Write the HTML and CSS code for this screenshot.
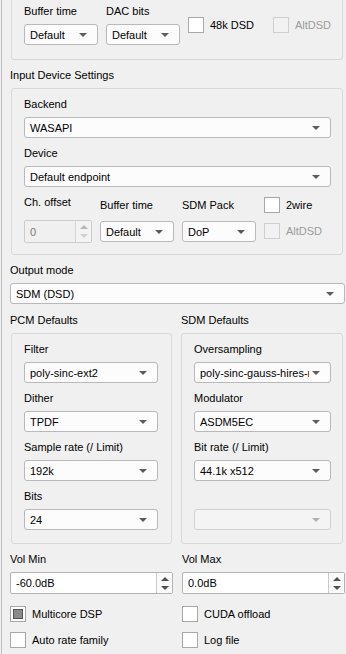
FILE: index.html
```
<!DOCTYPE html>
<html lang="en">
<head>
  <meta charset="UTF-8">
  <title>Output Settings</title>
  <link rel="stylesheet" href="styles.css">
</head>
<body>
<div class="page">

  <!-- Output device group (scrolled, top cut off) -->
  <div class="group group-cut">
    <div class="row">
      <div class="field w74">
        <span class="lbl">Buffer time</span>
        <div class="combo"><span>Default</span><i class="arrow"></i></div>
      </div>
      <div class="field w74">
        <span class="lbl">DAC bits</span>
        <div class="combo"><span>Default</span><i class="arrow"></i></div>
      </div>
      <label class="check check-top w81"><span class="box"></span>48k DSD</label>
      <label class="check check-top disabled"><span class="box"></span>AltDSD</label>
    </div>
  </div>

  <div class="section-lbl">Input Device Settings</div>
  <div class="group">
    <span class="lbl">Backend</span>
    <div class="combo"><span>WASAPI</span><i class="arrow"></i></div>
    <span class="lbl gap-top">Device</span>
    <div class="combo"><span>Default endpoint</span><i class="arrow"></i></div>

    <div class="row gap-top">
      <div class="field w68">
        <span class="lbl lbl-offset">Ch. offset</span>
        <div class="spin spin-tall disabled">
          <span class="spin-text">0</span>
          <span class="spin-btns"><i class="up"></i><i class="down"></i></span>
        </div>
      </div>
      <div class="field w74 field-low">
        <span class="lbl">Buffer time</span>
        <div class="combo"><span>Default</span><i class="arrow"></i></div>
      </div>
      <div class="field w74 field-low">
        <span class="lbl">SDM Pack</span>
        <div class="combo"><span>DoP</span><i class="arrow"></i></div>
      </div>
      <div class="check-col">
        <label class="check"><span class="box"></span>2wire</label>
        <label class="check disabled"><span class="box"></span>AltDSD</label>
      </div>
    </div>
  </div>

  <div class="section-lbl">Output mode</div>
  <div class="combo"><span>SDM (DSD)</span><i class="arrow"></i></div>

  <div class="cols">
    <div>
      <div class="section-lbl">PCM Defaults</div>
      <div class="group group-pcm">
        <span class="lbl">Filter</span>
        <div class="combo"><span>poly-sinc-ext2</span><i class="arrow"></i></div>
        <span class="lbl gap-top">Dither</span>
        <div class="combo"><span>TPDF</span><i class="arrow"></i></div>
        <span class="lbl gap-top">Sample rate (/ Limit)</span>
        <div class="combo"><span>192k</span><i class="arrow"></i></div>
        <span class="lbl gap-top">Bits</span>
        <div class="combo"><span>24</span><i class="arrow"></i></div>
      </div>
    </div>
    <div>
      <div class="section-lbl">SDM Defaults</div>
      <div class="group group-sdm">
        <span class="lbl">Oversampling</span>
        <div class="combo"><span class="clip">poly-sinc-gauss-hires-mp</span><i class="arrow"></i></div>
        <span class="lbl gap-top">Modulator</span>
        <div class="combo"><span>ASDM5EC</span><i class="arrow"></i></div>
        <span class="lbl gap-top">Bit rate (/ Limit)</span>
        <div class="combo"><span>44.1k x512</span><i class="arrow"></i></div>
        <div class="lbl-spacer"></div>
        <div class="combo disabled"><span></span><i class="arrow"></i></div>
      </div>
    </div>
  </div>

  <div class="bottom">
    <div>
      <div class="section-lbl">Vol Min</div>
      <div class="spin">
        <span class="spin-text">-60.0dB</span>
        <span class="spin-btns"><i class="up"></i><i class="down"></i></span>
      </div>
    </div>
    <div>
      <div class="section-lbl">Vol Max</div>
      <div class="spin">
        <span class="spin-text">0.0dB</span>
        <span class="spin-btns"><i class="up"></i><i class="down"></i></span>
      </div>
    </div>
    <label class="check check-first"><span class="box partial"></span>Multicore DSP</label>
    <label class="check check-first"><span class="box"></span>CUDA offload</label>
    <label class="check"><span class="box"></span>Auto rate family</label>
    <label class="check"><span class="box"></span>Log file</label>
  </div>

</div>
</body>
</html>
```
FILE: styles.css
```
body {
  margin: 0;
  background: #f0f0f0;
  font-family: "Liberation Sans", Arial, sans-serif;
  font-size: 11px;
  color: #000;
}
.page {
  margin-left: 1px;
  border-left: 1px solid #bcbcbc;
  padding: 0 1px 0 8px;
  min-height: 654px;
  box-sizing: border-box;
  overflow: hidden;
}
.lbl {
  display: block;
  height: 14px;
  line-height: 14px;
  margin-bottom: 6px;
  white-space: nowrap;
}
.gap-top {
  margin-top: 8px;
}
.section-lbl {
  height: 14px;
  line-height: 14px;
  margin: 8px 0 6px;
  white-space: nowrap;
}
.group {
  margin: 0 2px 0 1px;
  border: 1px solid #d9d9d9;
  border-radius: 3px;
  padding: 8px 11px 11px 12px;
}
.group-cut {
  border-top: none;
  border-radius: 0 0 3px 3px;
  padding-top: 4px;
  padding-bottom: 14px;
}
.row {
  display: flex;
  gap: 8px;
}
.field {
  flex: none;
}
.w74 { width: 74px; }
.w68 { width: 68px; }
.w81 { width: 81px; }
.field-low {
  padding-top: 3px;
}
.field-low .lbl {
  margin-bottom: 9px;
}
.lbl-offset {
  margin-bottom: 11px;
}

/* combo box */
.combo {
  display: flex;
  align-items: center;
  justify-content: space-between;
  height: 21px;
  box-sizing: border-box;
  padding: 0 10px 0 5px;
  border: 1px solid #b9b9b9;
  border-radius: 3px;
  background: #fcfcfc;
  white-space: nowrap;
  overflow: hidden;
}
.combo .clip {
  flex: 1;
  overflow: hidden;
}
.arrow {
  flex: none;
  width: 0;
  height: 0;
  margin-left: 3px;
  border-left: 4px solid transparent;
  border-right: 4px solid transparent;
  border-top: 4px solid #5c5c5c;
}
.combo.disabled {
  background: #f4f4f4;
  border-color: #d0d0d0;
}
.combo.disabled .arrow {
  border-top-color: #b0b0b0;
}

/* spin box */
.spin {
  display: flex;
  height: 22px;
  box-sizing: border-box;
  border: 1px solid #b3b3b3;
  border-radius: 2px;
  background: #fff;
}
.spin-tall {
  height: 23px;
}
.spin-text {
  flex: 1;
  padding-left: 5px;
  display: flex;
  align-items: center;
}
.spin-btns {
  width: 15px;
  border-left: 1px solid #cbcbcb;
  display: flex;
  flex-direction: column;
  align-items: center;
  justify-content: center;
  gap: 5px;
  background: #fafafa;
}
.spin-btns .up {
  border-left: 4px solid transparent;
  border-right: 4px solid transparent;
  border-bottom: 4px solid #505050;
}
.spin-btns .down {
  border-left: 4px solid transparent;
  border-right: 4px solid transparent;
  border-top: 4px solid #505050;
}
.spin.disabled {
  background: #f0f0f0;
  border-color: #cccccc;
  color: #7a7a7a;
}
.spin.disabled .spin-btns {
  background: #f3f3f3;
  border-left-color: #d6d6d6;
}
.spin.disabled .up {
  border-bottom-color: #b8b8b8;
}
.spin.disabled .down {
  border-top-color: #d0d0d0;
}

/* check box */
.check {
  display: flex;
  align-items: center;
  gap: 6px;
  height: 16px;
  white-space: nowrap;
}
.box {
  flex: none;
  width: 16px;
  height: 16px;
  box-sizing: border-box;
  border: 1px solid #a8a8a8;
  background: #fff;
  display: flex;
  align-items: center;
  justify-content: center;
}
.box.partial::after {
  content: "";
  width: 10px;
  height: 10px;
  box-sizing: border-box;
  background: #8a8a8a;
  border: 1px solid #555;
}
.check.disabled {
  color: #9b9b9b;
}
.check.disabled .box {
  background: #f2f2f2;
  border-color: #cfcfcf;
}
.check-top {
  margin-top: 13px;
}
.check-col {
  display: flex;
  flex-direction: column;
  gap: 10px;
  padding-top: 2px;
}

/* two columns */
.cols {
  display: grid;
  grid-template-columns: 163px 164px;
  column-gap: 8px;
}
.cols .section-lbl {
  margin-top: 9px;
}
.group-pcm {
  margin: 0 1px 0 1px;
  padding: 8px 13px 13px 12px;
}
.group-sdm {
  margin: 0 2px 0 0;
  padding: 8px 11px 13px 12px;
}
.lbl-spacer {
  height: 14px;
  margin: 8px 0 6px;
}

/* bottom area */
.bottom {
  display: grid;
  grid-template-columns: 163px 163px;
  column-gap: 9px;
  row-gap: 10px;
}
.check-first {
  margin-top: 2px;
}
```
